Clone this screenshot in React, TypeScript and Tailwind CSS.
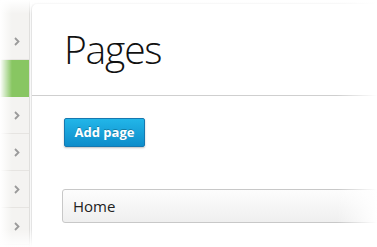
import React from 'react';

const rows = [false, true, false, false, false, false];

const Chevron: React.FC = () => (
  <svg width="6" height="9" viewBox="0 0 6 9" className="text-[#9a9a9a]">
    <path d="M1 1l3.5 3.5L1 8" fill="none" stroke="currentColor" strokeWidth="1.8" />
  </svg>
);

export default function App() {
  return (
    <div
      className="relative w-[377px] h-[247px] overflow-hidden bg-white flex"
      style={{ fontFamily: '"Open Sans", "Noto Sans", sans-serif' }}
    >
      <div className="w-[30px] shrink-0 bg-[#f4f3f1] border-r border-[#e2e1df] pt-[23px]">
        {rows.map((active, i) => (
          <div
            key={i}
            className={`h-[37px] flex items-center justify-end pr-[9px] border-b ${
              active ? 'bg-[#88c662] border-[#88c662]' : 'border-[#e6e4e1]'
            }`}
          >
            {!active && <Chevron />}
          </div>
        ))}
      </div>

      <div className="flex-1 mt-[3px] ml-[1px] bg-white border-l border-t border-[#e4e4e4] rounded-tl-[6px] shadow-[0_0_3px_rgba(0,0,0,0.08)]">
        <div className="h-[92px] border-b border-[#cfcfcf] pl-[32px] flex items-center">
          <h1 className="text-[39px] font-light text-[#111] leading-none pb-[3px] tracking-[-1.2px]">Pages</h1>
        </div>
        <div className="pl-[32px] pt-[22px]">
          <button
            type="button"
            className="h-[29px] w-[81px] rounded-[2px] border border-[#1678b0] bg-gradient-to-b from-[#22b6e8] to-[#0e8dcb] text-white text-[13px] font-bold shadow-[0_1px_2px_rgba(0,0,0,0.25)] [text-shadow:0_-1px_0_rgba(0,0,0,0.25)]"
          >
            Add page
          </button>
        </div>
        <div className="pl-[30px] pt-[42px]">
          <div className="h-[34px] w-[340px] rounded-[3px] border border-[#c8c8c8] bg-gradient-to-b from-[#fdfdfd] to-[#efefef] flex items-center pl-[10px] text-[15px] text-[#222]">
            Home
          </div>
        </div>
      </div>

      <div className="pointer-events-none absolute inset-y-0 left-0 w-[12px] bg-gradient-to-r from-white to-transparent" />
      <div className="pointer-events-none absolute inset-x-0 top-0 h-[14px] bg-gradient-to-b from-white to-transparent" />
      <div className="pointer-events-none absolute inset-y-0 right-0 w-[40px] bg-gradient-to-l from-white to-transparent" />
      <div className="pointer-events-none absolute inset-x-0 bottom-0 h-[18px] bg-gradient-to-t from-white to-transparent" />
    </div>
  );
}
